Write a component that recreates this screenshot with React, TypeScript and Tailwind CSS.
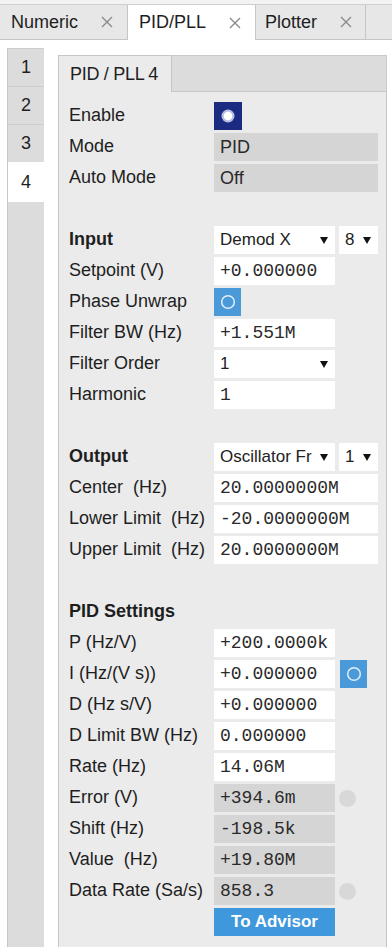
import React from "react";

const mono = "font-['Liberation_Mono','DejaVu_Sans_Mono',monospace] text-[18px]";

function Close() {
  return (
    <svg width="12" height="12" viewBox="0 0 12 12">
      <path d="M1 1L11 11M11 1L1 11" stroke="#8a8a8a" strokeWidth="1.4" />
    </svg>
  );
}

function Arrow() {
  return (
    <svg width="8" height="7" viewBox="0 0 8 7">
      <path d="M0 0H8L4 7Z" fill="#111" />
    </svg>
  );
}

function Row({ label, bold, children }: { label?: string; bold?: boolean; children?: React.ReactNode }) {
  return (
    <div className="flex h-[28px] items-center">
      <div className={`w-[145px] shrink-0 whitespace-pre text-[18px] leading-none ${bold ? "font-bold" : ""} -mt-[2px]`}>
        {label}
      </div>
      {children}
    </div>
  );
}

function Field({ v, wide, gray, monoFont = true }: { v: string; wide?: boolean; gray?: boolean; monoFont?: boolean }) {
  return (
    <div
      className={`h-[28px] ${wide ? "w-[164px]" : "w-[121px]"} ${gray ? "bg-[#d5d5d5]" : "bg-white"} flex items-center pl-[6px] text-[#2a2a2a] whitespace-pre ${
        monoFont ? mono : "text-[18px]"
      }`}
    >
      {v}
    </div>
  );
}

function Select({ v, w }: { v: string; w: string }) {
  return (
    <div className={`h-[28px] ${w} bg-white flex items-center justify-between pl-[6px] pr-[7px] text-[17px] text-[#222] overflow-hidden whitespace-nowrap`}>
      <span className="overflow-hidden">{v}</span>
      <span className="shrink-0 ml-[4px]">
        <Arrow />
      </span>
    </div>
  );
}

function BlueCheck({ ml }: { ml?: boolean }) {
  return (
    <div className={`h-[28px] w-[27px] bg-[#4a9ad9] flex items-center justify-center ${ml ? "ml-[5px]" : ""}`}>
      <svg width="18" height="18" viewBox="0 0 18 18">
        <circle cx="9" cy="9" r="6.3" fill="none" stroke="#e3eefa" strokeWidth="1.5" />
      </svg>
    </div>
  );
}

function Dot() {
  return <div className="ml-[4px] h-[17px] w-[17px] rounded-full bg-[#d8d8d8]" />;
}

function Empty() {
  return <div className="h-[28px]" />;
}

export default function App() {
  return (
    <div className="w-[392px] h-[947px] overflow-hidden bg-white font-['Liberation_Sans',Arial,sans-serif] text-[#1e1e1e]">
      <div className="h-[5px] bg-[#f3f3f3] border-b border-[#cfcfcf]" />
      <div className="flex h-[35px] bg-[#e7e7e7] border-b border-[#c6c6c6]">
        <div className="w-[128px] flex items-center justify-between pl-[11px] pr-[14px] border-r border-[#c6c6c6] text-[18px]">
          <span>Numeric</span>
          <Close />
        </div>
        <div className="w-[128px] h-[35px] bg-white flex items-center justify-between pl-[11px] pr-[14px] border-r border-[#c6c6c6] text-[18px]">
          <span>PID/PLL</span>
          <Close />
        </div>
        <div className="w-[110px] flex items-center justify-between pl-[9px] pr-[13px] border-r border-[#c6c6c6] text-[18px]">
          <span>Plotter</span>
          <Close />
        </div>
        <div className="flex-1" />
      </div>
      <div className="flex pl-[7px] pt-[8px] h-[907px]">
        <div className="w-[37px] border-l border-[#c6c6c6] flex flex-col shrink-0">
          {["1", "2", "3"].map((n) => (
            <div key={n} className="h-[38px] bg-[#dcdcdc] border-t border-[#cdcdcd] flex items-center justify-center text-[18px]">
              {n}
            </div>
          ))}
          <div className="h-[40px] bg-white flex items-center justify-center text-[18px]">4</div>
          <div className="flex-1 bg-[#dcdcdc]" />
        </div>
        <div className="ml-[14px] mt-[7px] w-[329px] flex flex-col">
          <div className="flex h-[37px]">
            <div className="w-[114px] bg-[#ebebeb] border-t border-l border-r border-[#c6c6c6] flex items-center pl-[11px] text-[18px] tracking-[-0.3px]">
              PID / PLL 4
            </div>
            <div className="flex-1 bg-[#dcdcdc] border-t border-r border-b border-[#c9c9c9]" />
          </div>
          <div className="flex-1 bg-[#ebebeb] border-l border-r border-[#c6c6c6] pl-[10px] pt-[10px] flex flex-col gap-[3px]">
            <Row label="Enable">
              <div className="h-[28px] w-[28px] bg-[#1c2b82] flex items-center justify-center">
                <svg width="16" height="16" viewBox="0 0 16 16">
                  <circle cx="8" cy="8" r="6.5" fill="#b9c0e2" />
                  <circle cx="8" cy="8" r="4.3" fill="#ffffff" />
                </svg>
              </div>
            </Row>
            <Row label="Mode">
              <Field v="PID" wide gray monoFont={false} />
            </Row>
            <Row label="Auto Mode">
              <Field v="Off" wide gray monoFont={false} />
            </Row>
            <Empty />
            <Row label="Input" bold>
              <Select v="Demod X" w="w-[121px]" />
              <div className="ml-[4px]">
                <Select v="8" w="w-[39px]" />
              </div>
            </Row>
            <Row label="Setpoint (V)">
              <Field v="+0.000000" />
            </Row>
            <Row label="Phase Unwrap">
              <BlueCheck />
            </Row>
            <Row label="Filter BW (Hz)">
              <Field v="+1.551M" />
            </Row>
            <Row label="Filter Order">
              <Select v="1" w="w-[121px]" />
            </Row>
            <Row label="Harmonic">
              <Field v="1" />
            </Row>
            <Empty />
            <Row label="Output" bold>
              <Select v="Oscillator Fr" w="w-[121px]" />
              <div className="ml-[4px]">
                <Select v="1" w="w-[39px]" />
              </div>
            </Row>
            <Row label="Center  (Hz)">
              <Field v="20.0000000M" wide />
            </Row>
            <Row label="Lower Limit  (Hz)">
              <Field v="-20.0000000M" wide />
            </Row>
            <Row label="Upper Limit  (Hz)">
              <Field v="20.0000000M" wide />
            </Row>
            <Empty />
            <Row label="PID Settings" bold />
            <Row label="P (Hz/V)">
              <Field v="+200.0000k" />
            </Row>
            <Row label="I (Hz/(V s))">
              <Field v="+0.000000" />
              <BlueCheck ml />
            </Row>
            <Row label="D (Hz s/V)">
              <Field v="+0.000000" />
            </Row>
            <Row label="D Limit BW (Hz)">
              <Field v="0.000000" />
            </Row>
            <Row label="Rate (Hz)">
              <Field v="14.06M" />
            </Row>
            <Row label="Error (V)">
              <Field v="+394.6m" gray />
              <Dot />
            </Row>
            <Row label="Shift (Hz)">
              <Field v="-198.5k" gray />
            </Row>
            <Row label="Value  (Hz)">
              <Field v="+19.80M" gray />
            </Row>
            <Row label="Data Rate (Sa/s)">
              <Field v="858.3" gray />
              <Dot />
            </Row>
            <Row>
              <div className="h-[28px] w-[121px] bg-[#3f98dc] flex items-center justify-center text-white font-bold text-[17px]">
                To Advisor
              </div>
            </Row>
          </div>
        </div>
      </div>
    </div>
  );
}
